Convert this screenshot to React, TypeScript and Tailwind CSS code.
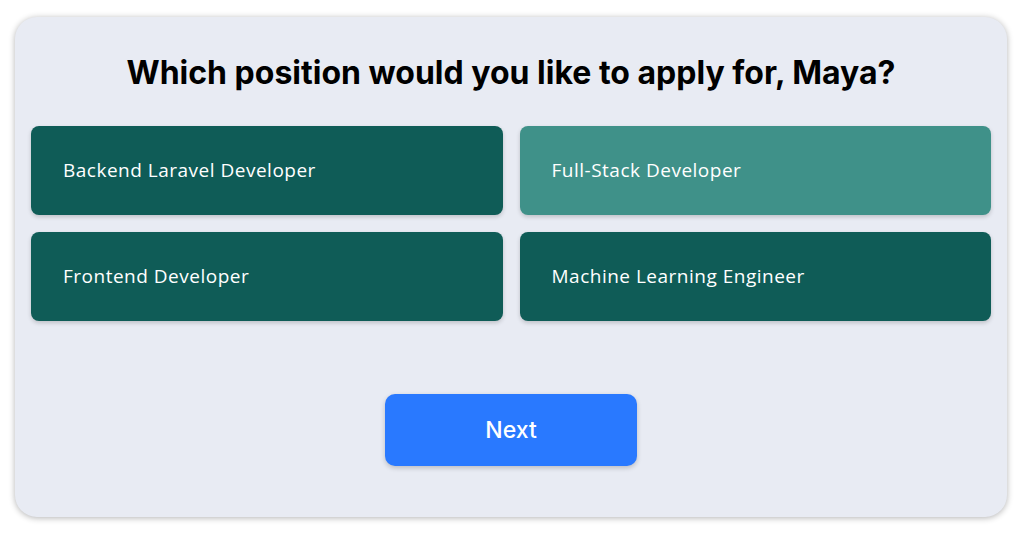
import React, { useState } from 'react';

const POSITIONS = [
  'Backend Laravel Developer',
  'Full-Stack Developer',
  'Frontend Developer',
  'Machine Learning Engineer',
];

const App: React.FC = () => {
  const [selected, setSelected] = useState(1);

  return (
    <div className="w-[1024px] h-[534px] bg-white pt-[17px] pl-[15px]">
      <div className="w-[992px] h-[500px] rounded-[22px] bg-[#e8ebf3] shadow-[0_1px_6px_rgba(0,0,0,0.3)] pt-[36px] flex flex-col items-center">
        <h1 className="text-[32px] leading-[40px] font-bold text-black font-['Inter',sans-serif]">
          Which position would you like to apply for, Maya?
        </h1>

        <div className="grid grid-cols-2 gap-[17px] w-[960px] mt-[33px]">
          {POSITIONS.map((p, i) => (
            <button
              key={p}
              onClick={() => setSelected(i)}
              className={
                'h-[89px] rounded-lg flex items-center pl-8 text-left text-white text-[19px] tracking-[0.5px] font-["Open_Sans",sans-serif] shadow-[0_2px_4px_rgba(0,0,0,0.18)] ' +
                (selected === i ? 'bg-[#3f9189]' : 'bg-[#0f5c57]')
              }
            >
              {p}
            </button>
          ))}
        </div>

        <button className="mt-[73px] w-[252px] h-[72px] rounded-[10px] bg-[#2979ff] text-white text-[23px] font-medium font-['Inter',sans-serif] shadow-[0_2px_5px_rgba(0,0,0,0.2)]">
          Next
        </button>
      </div>
    </div>
  );
};

export default App;
